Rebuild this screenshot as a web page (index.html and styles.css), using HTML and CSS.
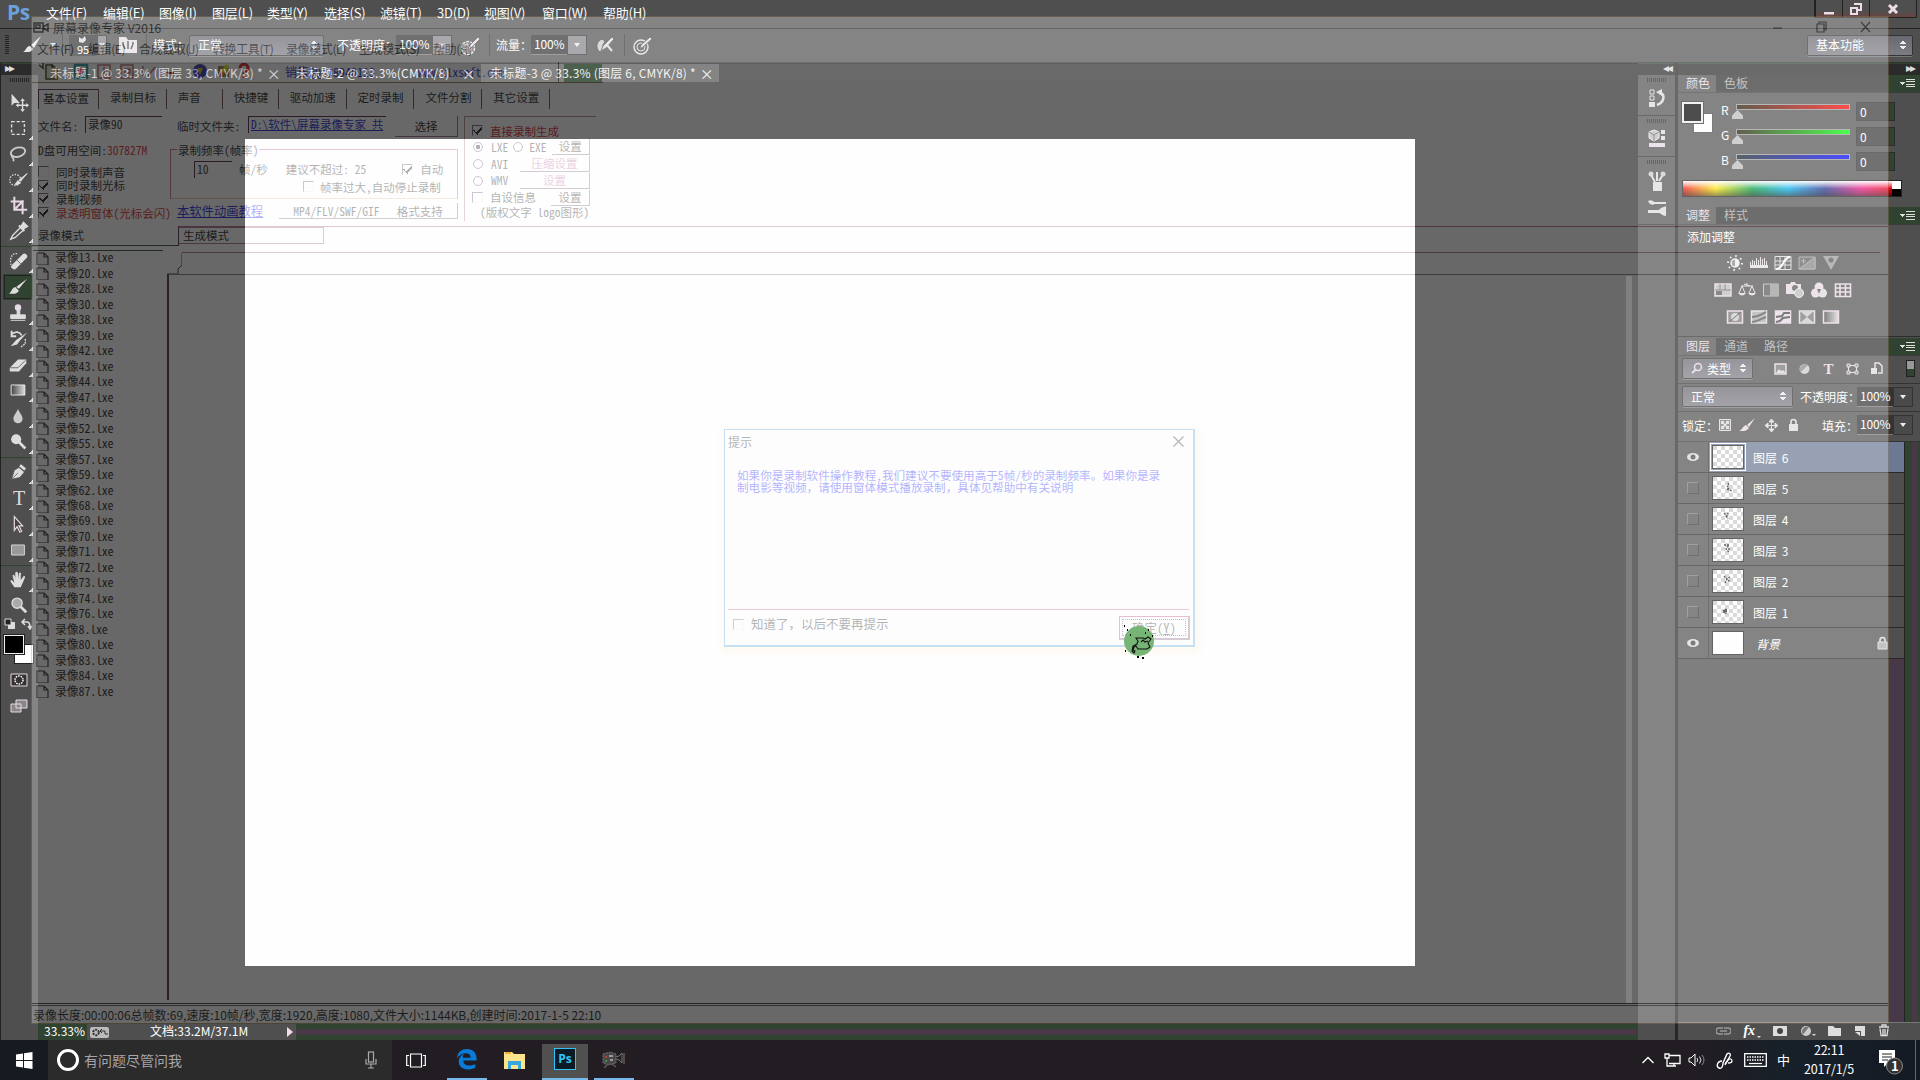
FILE: index.html
```html
<!DOCTYPE html>
<html lang="zh-CN">
  <head>
    <meta charset="UTF-8" />
    <meta name="viewport" content="width=device-width, initial-scale=1.0" />
    <title>Photoshop</title>
    <link rel="stylesheet" href="styles.css">
  </head>
  <body>
    <div class="desktop">
      <!-- Photoshop window -->
      <div class="ps">
        <header class="menubar">
          <div class="logo">Ps</div>
          <span class="m57">文件(F)</span><span class="m56">编辑(E)</span><span class="m53">图像(I)</span><span class="m55">图层(L)</span><span class="m57">类型(Y)</span><span class="m56">选择(S)</span><span class="m57">滤镜(T)</span><span class="m47">3D(D)</span><span class="m58">视图(V)</span><span class="m61">窗口(W)</span><span>帮助(H)</span>
          <div class="winButtons">
            <b class="minBtn"><svg width="12" height="12"><path d="M1 9h10v2.500H1z" fill="#f0dce8" /></svg></b>
            <b class="restoreBtn"><svg width="14" height="12"><path d="M5 1h7v6H9M2 5h6v6H2z" fill="none" stroke="#f0dce8" stroke-width="2" /></svg></b>
            <b class="closeBtn"><svg width="12" height="12"><path d="M2 2l8 8M10 2l-8 8" stroke="#f0dce8" stroke-width="3" /></svg></b>
          </div>
        </header>

        <div class="options">
          <i class="grip"></i>
          <svg class="optBrush" width="20" height="18"><path d="M19 0L9 9l3 3z" fill="#e8e8e8" /><path d="M8 10l3 3c-2 4-6 3-10 3 3-1 3-6 7-6z" fill="#e8e8e8" /></svg>
          <i class="tri"></i>
          <i class="vsep s1"></i>
          <div class="brushSize"><svg width="12" height="9"><path d="M2 2l3 2 3-3 1 4-3 3-4-1z" fill="#ddd" /></svg>95</div>
          <div class="drop narrow"><i class="tri"></i></div>
          <svg class="brushPanel" width="18" height="18"><path d="M0 1h7l2 3h9v13H0z" fill="#e6dfe4" /><path d="M4 8l2 5M9 7v6M14 8l-2 5M3 7h2M8 6h2M13 7h2" stroke="#444" stroke-width="1.500" /></svg>
          <i class="vsep s2"></i>
          <label class="modeLabel">模式：</label>
          <div class="select modeSelect">正常<i class="updown"></i></div>
          <label class="opacityLabel">不透明度：</label>
          <div class="numBox">100%</div><div class="drop"><i class="tri"></i></div>
          <svg class="optIcon" width="21" height="19"><circle cx="8" cy="12" r="6.500" fill="#666" stroke="#ddd" stroke-width="1.500" stroke-dasharray="3 1" /><path d="M4 9h8M3 13h9M7 7v10M11 8v9" stroke="#ddd" /><path d="M8 14l1-4 9-9 2 2-9 9z" fill="#e4dce2" stroke="#555" /></svg>
          <i class="vsep s3"></i>
          <label class="flowLabel">流量：</label>
          <div class="numBox">100%</div><div class="drop"><i class="tri"></i></div>
          <svg class="optIcon" width="21" height="19"><path d="M8 3C1 4 0 13 5 16c4-1 1-7 5-10z" fill="#ccc" stroke="#444" /><path d="M6 15l2-5L17 1l2 2-8 9zM13 9l5 5" fill="#e4dce2" stroke="#555" /><path d="M12 9l5 6" stroke="#ddd" stroke-width="2" /></svg>
          <i class="vsep s4"></i>
          <svg class="optIcon last" width="21" height="19"><circle cx="8" cy="11" r="7" fill="none" stroke="#ddd" stroke-width="1.500" /><circle cx="8" cy="11" r="4" fill="none" stroke="#ddd" /><path d="M7 13l1-4 9-8 2 2-9 8z" fill="#e4dce2" stroke="#555" /></svg>
          <div class="select workspace">基本功能<i class="updown"></i></div>
        </div>

        <div class="main">
          <!-- Tool palette -->
          <div class="toolbox">
            <div class="dockHead">▸▸</div>
            <i class="dots"></i>
            <div class="toolGroup">
              <div class="tool plain"><svg viewBox="0 0 24 24"><path d="M5 3v13l3-3 6 0z" fill="#ddd" /><path d="M17 10v11M11.500 15.500h11" stroke="#ddd" stroke-width="1.500" /><path d="M17 8l2.500 3h-5zM17 23l2.500-3h-5zM9.500 15.500l3-2.500v5zM24 15.500l-3-2.500v5z" fill="#ddd" /></svg></div>
              <div class="tool"><svg viewBox="0 0 24 24"><path d="M5 5h14v14H5z" fill="none" stroke="#ddd" stroke-width="1.500" stroke-dasharray="3.500 2" /></svg></div>
              <div class="tool"><svg viewBox="0 0 24 24"><ellipse cx="12" cy="10" rx="8" ry="5" transform="rotate(-15 12 10)" fill="none" stroke="#ccc" stroke-width="2" /><path d="M6 13c-3 2 3 3 1 7" fill="none" stroke="#ccc" stroke-width="2" /></svg></div>
              <div class="tool"><svg viewBox="0 0 24 24"><circle cx="9" cy="12" r="6" fill="none" stroke="#ddd" stroke-width="1.500" stroke-dasharray="1.500 1.500" /><path d="M22 5l-7 8-2-1z" fill="#ddd" stroke="#ddd" /><path d="M12 12l3 3c-3 4-7 2-7 2z" fill="#ddd" /></svg></div>
              <div class="tool"><svg viewBox="0 0 24 24"><path d="M8 2v14h14M4 7h13v14M9 15l9-9" fill="none" stroke="#e8d8e4" stroke-width="2.200" /></svg></div>
              <div class="tool"><svg viewBox="0 0 24 24"><path d="M6 17l9-9 3 3-9 8-5 2z" fill="none" stroke="#ddd" stroke-width="1.500" /><path d="M13 6l6 6M15 8l3-5 4 4-5 3z" fill="#ddd" stroke="#ddd" stroke-width="2" /></svg></div>
            </div>
            <div class="toolGroup">
              <div class="tool"><svg viewBox="0 0 24 24"><path d="M11 4c-9-1-8 12-5 16" fill="none" stroke="#ddd" stroke-width="1.500" stroke-dasharray="1.500 1.500" /><path d="M8 18L19 7" stroke="#ddd" stroke-width="6" stroke-linecap="round" /><path d="M11 11l5 5" stroke="#666" /></svg></div>
              <div class="tool active"><svg viewBox="0 0 24 24"><path d="M22 3l-9 11-3-2z" fill="#e8d8e4" /><path d="M9 12l4 4c-3 5-8 3-11 3 3-1 3-6 7-7z" fill="#ddd" /></svg></div>
              <div class="tool"><svg viewBox="0 0 24 24"><circle cx="12" cy="6" r="3.500" fill="#e8d8e4" /><path d="M11 8h3v6h6v4H4v-4h7zM4 20h16" fill="#ddd" stroke="#ddd" /></svg></div>
              <div class="tool"><svg viewBox="0 0 24 24"><path d="M5 7c4-4 9-3 11 1M5 3v6h5" fill="none" stroke="#ddd" stroke-width="2" /><path d="M22 5l-8 9-3 4-7 2 6-7z" fill="#ddd" /><path d="M20 12v5l-5 4" fill="none" stroke="#ddd" stroke-width="1.500" stroke-dasharray="2 1" /></svg></div>
              <div class="tool"><svg viewBox="0 0 24 24"><path d="M3 15L12 6h9v4l-8 9H3z" fill="#ddd" /><path d="M3 15h9l8-8" stroke="#666" fill="none" /></svg></div>
              <div class="tool"><svg viewBox="0 0 24 24"><defs><linearGradient id="grad"><stop offset="0" stop-color="#444" /><stop offset="1" stop-color="#ddd" /></linearGradient></defs><path d="M4.500 6.500h15v11h-15z" fill="url(#grad)" stroke="#eee" /></svg></div>
              <div class="tool"><svg viewBox="0 0 24 24"><path d="M12 4c1 4 5 7 5 11a5 5 0 0 1-10 0c0-4 4-7 5-11z" fill="#ccc" /></svg></div>
              <div class="tool"><svg viewBox="0 0 24 24"><circle cx="10" cy="9" r="5.500" fill="#ddd" /><path d="M13 12l7 7" stroke="#ddd" stroke-width="3" /></svg></div>
            </div>
            <div class="toolGroup g3">
              <div class="tool"><svg viewBox="0 0 24 24"><path d="M15 3l6 5-2 3-6-5zM13 7l6 5-5 6-9 2 3-10zM5 20l7-7" fill="#ddd" stroke="#555" stroke-width=".8" /></svg></div>
              <div class="tool"><span class="typeT">T</span></div>
              <div class="tool"><svg viewBox="0 0 24 24"><path d="M8 4v15l3-4 3 6 2-1-3-6h4z" fill="#444" stroke="#e8d8e4" stroke-width="1.300" /></svg></div>
              <div class="tool"><svg viewBox="0 0 24 24"><path d="M5 6.500h14v11H5z" fill="#999" stroke="#ddd" /></svg></div>
            </div>
            <div class="toolGroup g4">
              <div class="tool"><svg viewBox="0 0 24 24"><path d="M8 20c-2-4-5-6-4-8 2 0 3 2 4 3L6 7c1-2 3 0 3 4V4c1-2 3-1 3 1v6l1-6c1-2 3-1 2 1v6l3-4c2-1 2 1 1 3l-4 9z" fill="#ddd" /></svg></div>
              <div class="tool plain"><svg viewBox="0 0 24 24"><circle cx="11" cy="10" r="5.500" fill="#aaa" stroke="#ddd" stroke-width="1.500" /><path d="M15 14l6 6" stroke="#ddd" stroke-width="3" /></svg></div>
            </div>
            <div class="miniRow">
              <svg width="28" height="12"><path d="M4 4h7v7H4z" fill="#ddd" /><path d="M1 1h6v6H1z" fill="#222" stroke="#ddd" /><path d="M19 4h4q3 0 3 5M21 1l-3 3 3 3M24 8l2 3 2-3" fill="none" stroke="#ddd" stroke-width="1.500" /></svg>
            </div>
            <div class="swatches"><i class="back"></i><i class="front"></i></div>
            <svg class="bottomTool" width="18" height="14"><path d="M1 1h16v12H1z" fill="#333" stroke="#e8d8e4" /><circle cx="9" cy="7" r="4" fill="none" stroke="#fff" stroke-width="1.500" stroke-dasharray="1.500 1" /></svg>
            <svg class="bottomTool second" width="18" height="14"><path d="M1 5h10v8H1zM6 1h11v8H6z" fill="#888" stroke="#e8d8e4" /></svg>
          </div>

          <div class="work">
            <div class="docTabs">
              <div class="doc d1">未标题-1 @ 33.3% (图层 33, CMYK/8) *<b>×</b></div>
              <div class="doc d2">未标题-2 @ 33.3%(CMYK/8)<b>×</b></div>
              <div class="doc d3">未标题-3 @ 33.3% (图层 6, CMYK/8) *<b>×</b></div>
            </div>
            <div class="stage"><div class="canvas"></div><i class="scroll"></i></div>
            <footer class="status">
              <div class="zoomCell">33.33%</div>
              <svg width="19" height="11"><rect width="19" height="11" rx="2" fill="#bbb" /><circle cx="6" cy="5.500" r="2.800" fill="none" stroke="#333" stroke-width="2" stroke-dasharray="2 1" /><path d="M10 4h5v3h3M12 2l-2 2 2 2" fill="none" stroke="#333" /></svg>
              <div class="docSize">文档:33.2M/37.1M</div>
              <i class="play"></i>
            </footer>
          </div>

          <!-- Collapsed dock -->
          <div class="iconDock">
            <div class="dockHead right">◂◂</div>
            <div class="dockCell c1"><i class="dots"></i><svg width="18" height="20"><path d="M2 2h4v4H2zM2 8h4v4H2z" fill="none" stroke="#ddd" /><path d="M1 14h6v5H1z" fill="#ddd" /><path d="M9 17c8-3 8-11 3-12" fill="none" stroke="#ddd" stroke-width="2.500" /><path d="M14 1v7L8 4z" fill="#ddd" /></svg></div>
            <div class="dockCell c1"><i class="dots"></i><svg width="18" height="20"><path d="M6 1l5 2v6l-5 3-5-3V3z" fill="#bbb" stroke="#eee" /><path d="M1 3l5 3 5-3M6 6v6" stroke="#666" fill="none" /><path d="M13 1h4v4h-4zM13 7h4v4h-4zM1 14h16v4H1z" fill="#e8d8e4" /></svg></div>
            <div class="dockCell c2"><i class="dots"></i>
              <svg width="18" height="22"><path d="M5 12h9v9H5z" fill="#ddd" /><path d="M2 3l5 9M9 2v9M16 3l-5 8" stroke="#ddd" stroke-width="2" /><circle cx="3" cy="4" r="2.500" fill="#ccc" /><circle cx="15" cy="4" r="2.500" fill="#ccc" /></svg>
              <svg width="20" height="20"><path d="M1 3c4-2 5 1 7 1h11v2H8C5 8 2 6 1 3zM1 12h11c2-3 6-3 7-4v10c-4 0-5-3-7-3H1z" fill="#ddd" /></svg>
            </div>
          </div>

          <!-- Panels -->
          <aside class="panels">
            <div class="dockHead right">▸▸</div>
            <div class="tabRow"><span class="on">颜色</span><span>色板</span><i class="flyout"></i></div>
            <div class="colorBody">
              <div class="colorTop">
                <div class="swatchPair"><i class="back"></i><i class="front"></i></div>
                <div class="sliders">
                  <div class="slider"><span>R</span><div class="track red"><i></i></div><b>0</b></div>
                  <div class="slider"><span>G</span><div class="track green"><i></i></div><b>0</b></div>
                  <div class="slider"><span>B</span><div class="track blue"><i></i></div><b>0</b></div>
                </div>
              </div>
              <div class="spectrum"><i></i></div>
            </div>
            <div class="tabRow adj"><span class="on">调整</span><span>样式</span><i class="flyout"></i></div>
            <div class="adjustBody">
              <p>添加调整</p>
              <div class="iconLine first">
                <svg viewBox="0 0 18 16"><circle cx="9" cy="8" r="4" fill="#888" stroke="#eee" stroke-width="1.500" /><path d="M9 4a4 4 0 0 1 0 8z" fill="#eee" /><circle cx="9" cy="8" r="7" fill="none" stroke="#eee" stroke-width="2" stroke-dasharray="1.500 4" /></svg>
                <svg viewBox="0 0 18 16"><path d="M0 13V7h1v3h1V5h1v5h1V6h1v4h1V3h1v7h1V5h1v5h1V2h1v8h1V4h1v6h1V3h1v7h1V6h1v4h1v3z" fill="#e6dfe4" /></svg>
                <svg viewBox="0 0 18 16"><path d="M1 1.500h16v13H1zM6 2v12M11 2v12M1 6h16M1 10h16" fill="none" stroke="#ddd" /><path d="M2 14C11 13 7 4 16 2" fill="none" stroke="#fff" stroke-width="1.800" /></svg>
                <svg viewBox="0 0 18 16" class="dim"><path d="M1 2h16v12H1z" fill="#666" stroke="#ddd" /><path d="M17 2v12H1zM3 6h5M5.500 3.500v5" fill="#aaa" stroke="#ddd" /></svg>
                <svg viewBox="0 0 18 16" class="dim"><path d="M1 1h16L9 15z" fill="#ccc" /><circle cx="9" cy="5" r="2.500" fill="#555" /></svg>
              </div>
              <div class="iconLine">
                <svg viewBox="0 0 18 16"><path d="M1 2h16v12H1z" fill="#bbb" stroke="#e8d8e4" stroke-width="1.500" /><path d="M1 8h16M6 2v6M11 2v6" stroke="#666" /><path d="M2 9h6v4H2z" fill="#555" /></svg>
                <svg viewBox="0 0 18 16"><path d="M9 1v3M3 4h12M4 4l-3 7M4 4l3 7M14 4l-3 7M14 4l3 7M6 2l6 2" fill="none" stroke="#e8d8e4" /><path d="M0 11h8q-4 5-8 0zM10 11h8q-4 5-8 0z" fill="#e8d8e4" /></svg>
                <svg viewBox="0 0 18 16"><path d="M1.500 2h15v12h-15z" fill="#555" stroke="#bbb" /><path d="M8 2h9v12H8z" fill="#999" /></svg>
                <svg viewBox="0 0 18 16"><path d="M0 2h4l1-2h4l1 2h5v10H0z" fill="#e8d8e4" /><circle cx="9" cy="6" r="3" fill="#555" /><circle cx="13" cy="11" r="4.500" fill="#bbb" stroke="#eee" /></svg>
                <svg viewBox="0 0 18 16"><circle cx="9" cy="5" r="4.500" fill="#e8d8e4" /><circle cx="5.500" cy="11" r="4.500" fill="#e8d8e4" /><circle cx="12.500" cy="11" r="4.500" fill="#ddd" /><path d="M7 7h4l-2 5z" fill="#555" /></svg>
                <svg viewBox="0 0 18 16"><path d="M1.500 2h15v12.500h-15zM1 6h16M1 10h16M6 2v12M11.500 2v12" fill="none" stroke="#e8d8e4" stroke-width="1.600" /></svg>
              </div>
              <div class="iconLine">
                <svg viewBox="0 0 18 16"><path d="M1.500 2h15v12h-15z" fill="#777" stroke="#e8d8e4" stroke-width="1.500" /><circle cx="9" cy="8" r="4" fill="#ccc" /><path d="M3 13L15 3" stroke="#444" /></svg>
                <svg viewBox="0 0 18 16"><path d="M1.500 2h15v12h-15z" fill="#aaa" stroke="#ddd" stroke-width="1.500" /><path d="M2 8c6 0 8-2 14-5M2 13c6 0 8-3 14-5" stroke="#555" fill="none" stroke-width="2" /></svg>
                <svg viewBox="0 0 18 16"><path d="M1.500 2h15v12h-15z" fill="#e8d8e4" stroke="#e8d8e4" stroke-width="1.500" /><path d="M2 8l6-1 2-3h6M2 13l4-1 3-3 7-1" stroke="#444" fill="none" stroke-width="2" /></svg>
                <svg viewBox="0 0 18 16"><path d="M1.500 2h15v12h-15z" fill="#777" stroke="#e8d8e4" stroke-width="1.500" /><path d="M2 2l7 6 7-6zM2 14l7-6 7 6z" fill="#ccc" /></svg>
                <svg viewBox="0 0 18 16"><path d="M1.500 2h15v12h-15z" fill="url(#grad)" stroke="#e8d8e4" stroke-width="1.500" /></svg>
              </div>
            </div>
            <div class="tabRow lay"><span class="on">图层</span><span>通道</span><span>路径</span><i class="flyout"></i></div>
            <div class="layerRow filter">
              <div class="select kind"><svg width="12" height="12"><circle cx="7" cy="5" r="3.500" fill="none" stroke="#e8d8e4" stroke-width="1.500" /><path d="M4.500 8L1 11" stroke="#e8d8e4" stroke-width="2" /></svg>类型<i class="updown"></i></div>
              <svg class="f1" width="13" height="12"><path d="M1 1h11v10H1z" fill="#777" stroke="#e8d8e4" stroke-width="1.500" /><path d="M2 10l3-4 2 2 2-1 3 3z" fill="#ddd" /></svg>
              <svg width="13" height="12"><circle cx="6.500" cy="6" r="5" fill="#ccc" /><path d="M3 9A5 5 0 0 1 10 2z" fill="#888" /></svg>
              <span class="filterT">T</span>
              <svg width="13" height="12"><path d="M2.500 2.500h8v7h-8z" fill="none" stroke="#e8d8e4" /><path d="M1 1h3v3H1zM9 1h3v3H9zM1 8h3v3H1zM9 8h3v3H9z" fill="#777" stroke="#e8d8e4" /></svg>
              <svg width="13" height="13"><path d="M5 6V1h4l3 3v7H8" fill="none" stroke="#e8d8e4" stroke-width="1.500" /><path d="M1 6h6v6H1z" fill="#ddd" /></svg>
              <i class="toggle"></i>
            </div>
            <div class="layerRow blend">
              <div class="select blendSelect">正常<i class="updown"></i></div>
              <label>不透明度：</label><div class="numBox">100%</div><div class="drop flat"><i class="tri"></i></div>
            </div>
            <div class="layerRow lock">
              <label class="lockLabel">锁定：</label>
              <svg width="12" height="12"><path d="M.5.500h11v11H.5z" fill="#777" stroke="#e8d8e4" /><path d="M2 2h3v3H2zM7 2h3v3H7zM4.500 4.500h3v3h-3zM2 7h3v3H2zM7 7h3v3H7z" fill="#ddd" /></svg>
              <svg width="16" height="14"><path d="M16 0L8 7l2 2zM7 7l3 3c-3 4-6 3-10 3 3-1 4-5 7-6z" fill="#e8d8e4" /></svg>
              <svg width="13" height="13"><path d="M6.500 0l2.500 3H4zM6.500 13L9 10H4zM0 6.500L3 4v5zM13 6.500L10 4v5zM6.500 2v9M2 6.500h9" fill="#ddd" stroke="#ddd" /></svg>
              <svg width="11" height="14"><path d="M1 6h9v7H1z" fill="#ddd" /><path d="M3 6V4a2.500 2.500 0 0 1 5 0v2" fill="none" stroke="#ddd" stroke-width="1.600" /></svg>
              <label class="fillLabel">填充：</label><div class="numBox">100%</div><div class="drop flat"><i class="tri"></i></div>
            </div>
            <div class="layersWrap">
              <div class="layers">
                <div class="layer selected"><div class="vis"><svg width="14" height="10"><ellipse cx="7" cy="5" rx="6" ry="4" fill="#ddd" /><circle cx="7" cy="5" r="2.500" fill="#444" /></svg></div><div class="thumb sel"></div><span>图层 6</span></div>
                <div class="layer"><div class="vis"><i></i></div><div class="thumb"><svg width="30" height="22"><path d="M15 6l1 2-2 2 3 3 2 1M14 12l2 1" fill="none" stroke="#222" stroke-width="1.400" stroke-dasharray="2 1" /></svg></div><span>图层 5</span></div>
                <div class="layer"><div class="vis"><i></i></div><div class="thumb"><svg width="30" height="22"><path d="M11 5l3 3 1-3M13 8l2 3" fill="none" stroke="#222" stroke-width="1.400" stroke-dasharray="2 1" /></svg></div><span>图层 4</span></div>
                <div class="layer"><div class="vis"><i></i></div><div class="thumb"><svg width="30" height="22"><path d="M11 6h5l-3 4 3 3M16 9v3" fill="none" stroke="#222" stroke-width="1.400" stroke-dasharray="2 1" /></svg></div><span>图层 3</span></div>
                <div class="layer"><div class="vis"><i></i></div><div class="thumb"><svg width="30" height="22"><path d="M11 6l3 3 3-2M12 13l2-4 3 3" fill="none" stroke="#222" stroke-width="1.400" stroke-dasharray="2 1" /></svg></div><span>图层 2</span></div>
                <div class="layer"><div class="vis"><i></i></div><div class="thumb"><svg width="30" height="22"><path d="M10 10h4M11 12l2-4v5" fill="none" stroke="#222" stroke-width="2" stroke-dasharray="2 1" /></svg></div><span>图层 1</span></div>
                <div class="layer"><div class="vis"><svg width="14" height="10"><ellipse cx="7" cy="5" rx="6" ry="4" fill="#ddd" /><circle cx="7" cy="5" r="2.500" fill="#444" /></svg></div><div class="thumb solid"></div><span class="bgName">背景</span><svg class="bgLock" width="11" height="14"><path d="M1 6h9v7H1z" fill="#aaa" stroke="#ddd" /><path d="M3 6V4a2.500 2.500 0 0 1 5 0v2" fill="none" stroke="#e8d8e4" stroke-width="1.600" /></svg></div>
              </div>
              <i class="layerScroll"></i>
            </div>
            <footer class="layerTools">
              <svg width="15" height="10"><path d="M7 2H3a3 3 0 0 0 0 6h4M8 2h4a3 3 0 0 1 0 6H8M4 5h7" fill="none" stroke="#999" stroke-width="1.500" /></svg>
              <em>fx<i class="corner"></i></em>
              <svg width="14" height="12"><path d="M0 1h14v10H0z" fill="#ddd" /><circle cx="7" cy="6" r="3" fill="#444" /></svg>
              <svg width="16" height="12"><circle cx="6" cy="6" r="5" fill="#ccc" /><path d="M3 9.500A5 5 0 0 1 9 2z" fill="#777" /><path d="M12 9h4l-2 2z" fill="#ddd" /></svg>
              <svg width="13" height="12"><path d="M0 1h5l2 2h6v8H0z" fill="#ddd" /></svg>
              <svg width="12" height="12"><path d="M1 1h10v10H7V6H1z" fill="#ddd" /><path d="M1 7l5 4V7z" fill="#ddd" /></svg>
              <svg width="12" height="13"><path d="M1 3h10M4 3V1h4v2M2 4.500l1 7h6l1-7M5 5v6M7 5v6" fill="none" stroke="#ddd" stroke-width="1.300" /></svg>
            </footer>
          </aside>
        </div>
      </div>

      <!-- Screen recorder window, fading out over Photoshop -->
      <div class="recorder">
        <div class="recTitle">
          <svg width="17" height="13"><path d="M1 2h9v9H1zM10 6l5-3v7l-5-3M3 4h4v3H3z" fill="none" stroke="#000" stroke-width="1.500" /></svg>
          <span>屏幕录像专家 V2016</span>
          <svg class="recButtons" width="100" height="14"><path d="M1 8h9M45 4h7v8h-7zM47 4V2h7v8h-2M89 2l9 10M98 2l-9 10" fill="none" stroke="#222" stroke-width="1.200" /></svg>
        </div>
        <div class="recMenu"><span>文件(F)</span><span>编辑(E)</span><span class="w74">合成截取(J)</span><span class="w73">转换工具(T)</span><span class="w73">录像模式(L)</span><span class="w74">生成模式(S)</span><span>帮助(H)</span></div>
        <div class="recTools">
          <svg width="220" height="18"><path d="M8 2h6l5 4v10H8zM1 2l5 4M5 0v5M14 1v4" fill="#ddb" stroke="#220" stroke-width="1.500" /><path d="M37 2h12v13H37z" fill="none" stroke="#088" stroke-width="2.500" /><circle cx="43" cy="8" r="3" fill="#c00" /><path d="M60 2h12v13H60zM66 4v7M83 2h12v13H83zM87 6h5v4h-5zM105 3v12M110 13l7-9" fill="none" stroke="#a55" stroke-width="1.500" /><path d="M128 10h8" stroke="#800" stroke-width="2" /><circle cx="162" cy="8" r="7" fill="#119" /><path d="M159 5h6l-3 7z" fill="#aa0" /><path d="M180 3h11v11h-11z" fill="#863" /><path d="M185 9l5-7" stroke="#dd0" stroke-width="4" /><path d="M202 5c0-5 8-5 8 0 0 3-4 3-4 6M206 13v2" fill="none" stroke="#c00" stroke-width="3" /></svg>
          <span class="contact">销售QQ:78940113</span><span class="site">www.tlxsoft.com</span><i class="rebar"></i>
        </div>
        <div class="recTabs"><span class="on">基本设置</span><span>录制目标</span><span class="t56">声音</span><span class="t56">快捷键</span><span>驱动加速</span><span>定时录制</span><span>文件分割</span><span>其它设置</span></div>

        <div class="settings">
          <div class="colA">
            <div class="fileRow"><label>文件名:</label><div class="field">录像90</div></div>
            <div class="space">D盘可用空间:<b>307827M</b></div>
            <div class="check"><i></i>同时录制声音</div>
            <div class="check"><i class="ok"></i>同时录制光标</div>
            <div class="check"><i class="ok"></i>录制视频</div>
            <div class="check warn"><i class="ok"></i>录透明窗体(光标会闪)</div>
          </div>
          <div class="colB">
            <div class="tempRow"><label>临时文件夹:</label><div class="field link">D:\软件\屏幕录像专家 共</div><div class="btn pick">选择</div></div>
            <div class="rate">
              <div class="rateLegend">录制频率(帧率)</div>
              <div class="rateRow"><div class="field">10</div><span>帧/秒</span><span class="advice">建议不超过: 25</span><div class="check auto"><i class="ok"></i>自动</div></div>
              <div class="check stop"><i></i>帧率过大,自动停止录制</div>
            </div>
            <div class="linkRow"><u>本软件动画教程</u><div class="btn formats">MP4/FLV/SWF/GIF&nbsp;&nbsp; 格式支持</div></div>
          </div>
          <div class="colC">
            <div class="check direct"><i class="ok"></i>直接录制生成</div>
            <div class="fmt"><i class="radio dot"></i><span class="lxe">LXE</span><i class="radio"></i><span>EXE</span><div class="btn small">设置</div></div>
            <div class="fmt"><i class="radio"></i><span>AVI</span><div class="btn wide">压缩设置</div></div>
            <div class="fmt"><i class="radio"></i><span>WMV</span><div class="btn wide">设置</div></div>
            <div class="fmt"><i class="box"></i><span>自设信息</span><div class="btn small">设置</div></div>
            <p>(版权文字 logo图形)</p>
          </div>
        </div>

        <div class="modes"><div class="modeA">录像模式</div><div class="modeB"><span>生成模式</span></div></div>
        <div class="files">
          <ul id="fileList"></ul>
          <div class="preview">
            <svg width="15" height="25"><path d="M0 24h11v-5l4-4V3" fill="none" stroke="#222" stroke-width="1" /></svg>
            <div class="previewTop"></div>
            <div class="previewBody"></div>
          </div>
        </div>
        <div class="recStatus"><span>录像长度:00:00:06总帧数:69,速度:10帧/秒,宽度:1920,高度:1080,文件大小:1144KB,创建时间:2017-1-5 22:10</span></div>
      </div>

      <!-- Hint dialog -->
      <div class="dialog">
        <div class="dialogTitle"><span>提示</span><svg width="11" height="11"><path d="M.5.500l10 10M10.500.500l-10 10" stroke="#222" stroke-width="1.200" /></svg></div>
        <div class="dialogText">如果你是录制软件操作教程,我们建议不要使用高于5帧/秒的录制频率<span class="full">。</span>如果你是录<br><span class="full">制电影等视频，请使用窗体模式播放录制，具体见帮助中有关说明</span></div>
        <div class="dialogFoot"><i></i><span class="full">知道了，以后不要再提示</span><div class="okBtn"><span>确定(<u>Y</u>)</span></div></div>
      </div>
      <svg class="pointer" width="36" height="38"><circle cx="18" cy="19" r="15" fill="#76b576" /><path d="M15 16h7l2 1 3-2 3 2-3 4 2 4-3 2h-9l-2-3-2 1-1 3 2 1-1 2-2-2 1-5 4-2 1-3zM20 20l2-2 2 2 3-1" fill="none" stroke="#111" stroke-width="1.100" /><path d="M3 4h1M6 8h1M9 13h1M27 8h1M31 14h1M4 29h1M16 35h2M21 36h2M24 11h1" stroke="#000" stroke-width="2" /></svg>

      <!-- Taskbar -->
      <div class="taskbar">
        <div class="start"><svg width="17" height="17"><path d="M0 2.500L7 1.500V8H0zM8 1.300L16.500 0v8H8zM0 9h7v6.500l-7-1zM8 9h8.500v8L8 15.700z" fill="#fff" /></svg></div>
        <div class="search"><i class="cortana"></i><span>有问题尽管问我</span><svg width="12" height="18"><rect x="3.500" y="1" width="5" height="10" fill="none" stroke="#aaa" stroke-width="1.200" /><path d="M1 8v5h10V8M6 13v4M3 17h6" fill="none" stroke="#aaa" stroke-width="1.200" /></svg></div>
        <div class="task view"><svg width="20" height="15"><path d="M4.500 1h11v13h-11zM3 2.500H.7v10H3M17 2.500h2.300v10H17" fill="none" stroke="#fff" stroke-width="1.200" /></svg></div>
        <div class="task edge run"><svg width="22" height="22" viewBox="0 0 24 24"><path d="M1 11C2 4 6 1 12 1c7 0 11 5 10.500 12.500H8c0 6 8 7 13 4v4c-8 4-18 2-18-7 0-4 3-7 6-8-1 1-1.500 2-1.500 4H16c0-7-10-6-15 .5z" fill="#0a7ad8" /></svg></div>
        <div class="task folder"><svg width="22" height="19"><path d="M0 1h8l2 2h11v15H0z" fill="#fce48c" /><path d="M1 1h6v2H1z" fill="#f0b030" /><path d="M4 10h13v8h-3v-4H7v4H4z" fill="#38a8dc" /></svg></div>
        <div class="task psTask run"><div class="psIcon">Ps</div></div>
        <div class="task cam run"><svg width="24" height="18"><path d="M1 4l7-2 6 2v9l-8 2-5-2z" fill="#4a4748" stroke="#777072" stroke-dasharray="2 1" /><path d="M14 7l3-1 3-3v10l-3-3-3-1" fill="#222" stroke="#777" /><path d="M22 3v11M5 15l-3 3M10 14l4 3" stroke="#655" stroke-width="1.500" /><path d="M3 6h2v2H3z" fill="#a43" /><path d="M3 10h2v2H3z" fill="#394" /><path d="M7 5h4v2H7zM8 9h3v2H8z" fill="#999" /></svg></div>
        <div class="tray">
          <svg class="tr1" width="12" height="8"><path d="M.5 7L6 1.500 11.500 7" fill="none" stroke="#fff" stroke-width="1.400" /></svg>
          <svg class="tr2" width="17" height="14"><path d="M5 2.500h11v8H5M1 1h4v4H1zM3 5v8h9M10 10.500V13" fill="none" stroke="#fff" stroke-width="1.300" /></svg>
          <svg class="tr3" width="17" height="14"><path d="M1 5h2l4-4v12L3 9H1z" fill="none" stroke="#fff" /><path d="M9 5q1.500 2 0 4M11.500 3.500q3 3.500 0 7" fill="none" stroke="#ddd" /><path d="M14 2q4 5 0 10" fill="none" stroke="#888" /></svg>
          <svg class="tr4" width="17" height="17"><path d="M6 9C1 9 0 15 3 16s4-2 4-5L11 2c2-2 4 0 3 2L9 13" fill="none" stroke="#fff" stroke-width="1.400" /><path d="M9 12l3-4c2-2 4-1 4 1s-2 2-4 2" fill="none" stroke="#fff" stroke-width="1.300" /></svg>
          <svg class="tr5" width="23" height="14"><path d="M.7.700h21.600v12.600H.7z" fill="none" stroke="#fff" stroke-width="1.300" /><path d="M3 4h17M3 7h17" stroke="#fff" stroke-width="1.500" stroke-dasharray="1.500 1" /><path d="M5 10.500h13" stroke="#fff" stroke-width="1.200" /></svg>
          <span class="ime">中</span>
          <div class="clock">22:11<br>2017/1/5</div>
          <svg class="note" width="24" height="25"><path d="M0 0h16v13h-7l-4 4v-4H0z" fill="#fff" /><path d="M3 4h10M3 7h10M3 10h6" stroke="#222" /><circle cx="15.500" cy="16" r="8" fill="#333" stroke="#888" /><text x="12" y="21" fill="#fff" font-size="13" font-weight="bold">1</text></svg>
          <i class="peek"></i>
        </div>
      </div>
    </div>

    <script>
      const names = ["13", "20", "28", "30", "38", "39", "42", "43", "44", "47", "49", "52", "55", "57", "59", "62", "68", "69", "70", "71", "72", "73", "74", "76", "8", "80", "83", "84", "87"];
      const fileList = document.getElementById("fileList");

      names.forEach((name) => {
        const item = document.createElement("li");
        item.innerHTML = `<svg width="13" height="13"><path d="M1 1h7l4 4v8H1zM8 1v4h4" fill="none" stroke="#201020" stroke-width="1.200"/></svg>录像${name}.lxe`;
        fileList.appendChild(item);
      });
    </script>
  </body>
</html>
```
FILE: styles.css
```css
* {
  margin: 0;
  padding: 0;
  box-sizing: border-box;
}

body {
  width: 1920px;
  height: 1080px;
  overflow: hidden;
  background: #282828;
  color: #fff;
  font-family: "Noto Sans CJK SC", sans-serif;
  font-size: 12px;
  white-space: nowrap;
}

i,
em {
  font-style: normal;
}

i {
  display: block;
  flex: none;
}

svg {
  display: block;
  flex: none;
}

.desktop {
  position: relative;
  width: 1920px;
  height: 1080px;
}

/* Photoshop frame */
.ps {
  height: 1040px;
  background: #4f4f4f;
  display: flex;
  flex-direction: column;
}

.menubar {
  height: 28px;
  display: flex;
  align-items: flex-start;
  font-size: 13px;
  line-height: 26px;
}

.menubar span {
  letter-spacing: -0.2px;
}

.logo {
  width: 46px;
  padding-left: 7px;
  color: #6ca0dc;
  font: bold 21px/24px "Open Sans", sans-serif;
  letter-spacing: -0.5px;
}

.m47 { width: 47px; }
.m53 { width: 53px; }
.m55 { width: 55px; }
.m56 { width: 56px; }
.m57 { width: 57px; }
.m58 { width: 58px; }
.m61 { width: 61px; }

.winButtons {
  display: flex;
  margin-left: auto;
  margin-right: 3px;
  height: 18px;
  border: 1px solid #222;
  border-top: 0;
}

.winButtons b {
  display: flex;
  align-items: center;
  justify-content: center;
  background: linear-gradient(#4f4f4f 65%, #6a4440);
  border-left: 1px solid #222;
  width: 27px;
}

.winButtons .closeBtn {
  width: 47px;
}

.options {
  height: 35px;
  border-top: 1px solid #222;
  border-bottom: 1px solid #333;
  padding-bottom: 1px;
  display: flex;
  align-items: center;
  font-size: 12px;
}

.options label {
  padding-bottom: 1px;
}

.grip {
  width: 4px;
  height: 20px;
  margin-left: 5px;
  background: repeating-linear-gradient(#222 0 1px, #4f4f4f 1px 2px);
}

.optBrush { margin-left: 13px; }
.optBrush + .tri { margin-left: 8px; }

.tri {
  border: 3px solid transparent;
  border-top: 4px solid #eee;
  border-bottom: 0;
}

.vsep {
  width: 1px;
  height: 22px;
  background: #333;
}

.s1 { margin: 0 6px 0 6px; }
.s2 { margin: 0 6px 0 9px; }
.s3 { margin: 0 6px 0 8px; }
.s4 { margin: 0 8px 0 8px; }

.brushSize {
  width: 28px;
  height: 21px;
  background: #353535;
  display: flex;
  flex-direction: column;
  align-items: center;
  line-height: 11px;
  font-size: 11px;
}

.drop {
  width: 20px;
  height: 20px;
  background: #84848a;
  border: 1px solid #333;
  display: flex;
  align-items: center;
  justify-content: center;
}

.drop.narrow { width: 10px; }
.drop.flat { background: #4a4a4a; }
.brushPanel { margin-left: 12px; }
.modeLabel { width: 36px; overflow: hidden; }

.select {
  height: 21px;
  background: linear-gradient(#686870, #7c7c84);
  border: 1px solid #333;
  border-radius: 2px;
  line-height: 17px;
  padding: 0 6px 1px 8px;
  display: flex;
  align-items: center;
  box-shadow: 0 1px 0 #777;
}

.modeSelect { width: 135px; }

.updown {
  margin-left: auto;
  width: 6px;
  height: 10px;
  background:
    conic-gradient(from 143deg at 50% 0, #eee 0 74deg, transparent 0) 0 0 / 6px 4px no-repeat,
    conic-gradient(from -37deg at 50% 100%, #eee 0 74deg, transparent 0) 0 6px / 6px 4px no-repeat;
}

.opacityLabel { width: 59px; margin-left: 13px; }

.numBox {
  width: 36px;
  height: 20px;
  background: #333;
  border-bottom: 1px solid #777;
  line-height: 18px;
  padding-left: 3px;
  overflow: hidden;
  letter-spacing: -0.2px;
}

.optIcon { margin-left: 8px; }
.optIcon.last { margin-left: 0; }
.flowLabel { width: 35px; overflow: hidden; }

.workspace {
  width: 106px;
  margin-left: auto;
  margin-right: 7px;
}

.main {
  flex: 1;
  min-height: 0;
  display: flex;
  background: #282828;
}

/* Tool palette */
.toolbox {
  width: 38px;
  background: #4f4f4f;
  border-left: 1px solid #222;
}

.dockHead {
  height: 12px;
  background: #2a2a2a;
  border-top: 1px solid #304330;
  color: #ddd;
  font: 12px/9px "DejaVu Sans", sans-serif;
  padding-left: 4px;
  letter-spacing: -2px;
}

.dockHead.right {
  text-align: right;
  padding-right: 6px;
}

.dots {
  width: 20px;
  height: 4px;
  margin: 3px auto 0 9px;
  background: repeating-linear-gradient(90deg, #262626 0 1px, #4f4f4f 1px 2px);
}

.toolGroup {
  margin-top: 7px;
}

.toolGroup + .toolGroup {
  margin-top: 1.7px;
  padding-top: 1px;
  border-top: 1px solid #304330;
}

.toolGroup.g3,
.toolGroup.g4 {
  margin-top: 2px;
}

.tool {
  height: 25.9px;
  width: 32px;
  padding: 2px 0 0 6px;
  background: linear-gradient(135deg, transparent 50%, #ddd 50%) 28px 21px / 4px 4px no-repeat;
}

.tool.plain { background: none; }

.tool svg {
  width: 22px;
  height: 22px;
}

.tool.active {
  margin-left: 2px;
  width: 30px;
  padding-left: 4px;
  background: #304330;
  outline: 1px solid #222;
  outline-offset: -2px;
}

.g4 .tool { height: 25.2px; }

.typeT {
  display: block;
  text-align: center;
  width: 24px;
  color: #ddd;
  font: 20px/22px "Liberation Serif", serif;
}

.miniRow {
  height: 15px;
  padding: 1px 0 0 3px;
}

.swatches {
  display: grid;
  width: 30px;
  height: 29px;
  margin: 3px 0 0 3px;
  grid-template: 9px 10px 10px / 10px 10px 10px;
}

.swatches .back {
  grid-area: 2 / 2 / 4 / 4;
  background: #fff;
  border: 1px solid #222;
}

.swatches .front {
  grid-area: 1 / 1 / 3 / 3;
  background: #000;
  border: 1px solid #eee;
  outline: 1px solid #222;
}

.bottomTool { margin: 9px 0 0 9px; }
.bottomTool.second { margin-top: 12px; }

/* Document area */
.work {
  width: 1600px;
  display: flex;
  flex-direction: column;
}

.docTabs {
  height: 19px;
  display: flex;
  background: #292929;
  border-top: 1px solid #1c1c1c;
  font-size: 12px;
  line-height: 18px;
  letter-spacing: 0.22px;
  color: #c4c0c4;
}

.doc {
  display: flex;
  justify-content: space-between;
  height: 18px;
}

.doc b {
  font-weight: normal;
  font-size: 14px;
}

.d1 { width: 243px; padding-left: 12px; }
.d2 { width: 186px; margin-left: 9px; padding-left: 6px; }

.d3 {
  width: 238px;
  margin-left: 5px;
  padding: 0 5px 0 9px;
  background: linear-gradient(90deg, #4f4f4f 83px, #001c00 83px 121px, #4f4f4f 121px);
}

.d2,
.d3 {
  color: #eee;
}

.stage {
  flex: 1;
  display: flex;
  justify-content: space-between;
  padding-left: 207px;
  padding-top: 57px;
}

.canvas {
  width: 1170px;
  height: 827px;
  background: #fff;
}

.scroll {
  width: 6px;
  height: 727px;
  margin: 137px 6px 0 0;
  background: #4a4a4a;
}

.status {
  height: 16px;
  display: flex;
  align-items: center;
  line-height: 13px;
  background: linear-gradient(#304330 5px, #483848 5px 11px, #304330 11px);
}

.zoomCell {
  width: 52px;
  height: 16px;
  padding-left: 6px;
  background: #304330;
}

.status svg {
  background: #4f4f4f;
  box-shadow: 0 0 0 3px #4f4f4f;
}

.docSize {
  width: 177px;
  height: 16px;
  padding-left: 41px;
  background: #4f4f4f;
}

.play {
  width: 10px;
  height: 16px;
  background: #4f4f4f;
}

.play::before {
  content: "";
  display: block;
  width: 0;
  margin: 3px 0 0 1px;
  border: 5px solid transparent;
  border-left: 6px solid #f0dce8;
  border-right: 0;
}

/* Collapsed dock */
.iconDock {
  width: 37px;
  background: #4f4f4f;
}

.iconDock .dockHead {
  padding-right: 4px;
}

.dockCell {
  height: 41px;
  border-bottom: 1px solid #2a2a2a;
  display: flex;
  flex-direction: column;
  align-items: center;
  gap: 6px;
}

.dockCell.c2 {
  height: 68px;
  gap: 6px;
}

/* Panels */
.panels {
  width: 242px;
  margin-left: 3px;
  background: #4f4f4f;
  display: flex;
  flex-direction: column;
}

.tabRow {
  height: 18px;
  display: flex;
  background: linear-gradient(90deg, #2e2e2e 210px, #304330 210px);
  border-bottom: 1px solid #3a3a3a;
  color: #aaa;
  line-height: 15px;
}

.tabRow span {
  width: 40px;
  padding-left: 8px;
}

.tabRow .on {
  width: 38px;
  background: #4f4f4f;
  color: #e4dce4;
}

.tabRow.adj { margin-top: 3px; }
.tabRow.lay { margin-top: 1px; }

.flyout {
  margin: 4px 5px 0 auto;
  width: 15px;
  height: 9px;
  background:
    conic-gradient(from 141deg at 50% 0, transparent 0, transparent 0) 0 0 / 0 0 no-repeat,
    conic-gradient(from -40deg at 50% 100%, #ddd 0 80deg, transparent 0) 0 3px / 5px 3px no-repeat,
    repeating-linear-gradient(#ddd 0 1px, transparent 1px 2.500px) 6px 0 / 9px 9px no-repeat;
}

.colorBody {
  height: 111px;
  padding: 7px 0 0 4px;
}

.colorTop {
  display: flex;
}

.swatchPair {
  display: grid;
  width: 31px;
  height: 31px;
  margin-top: 2px;
  grid-template: 11px 10px 10px / 11px 10px 10px;
}

.swatchPair .back {
  grid-area: 2 / 2 / 4 / 4;
  background: #fff;
  border: 1px solid #444;
}

.swatchPair .front {
  grid-area: 1 / 1 / 3 / 3;
  background: #000;
  border: 2px solid #eee;
  outline: 1px solid #333;
}

.sliders {
  padding-left: 8px;
}

.slider {
  height: 25px;
  display: flex;
  align-items: flex-start;
}

.slider span {
  width: 15px;
  line-height: 20px;
}

.track {
  width: 114px;
  height: 6px;
  margin-top: 4px;
  border: 1px solid #999;
}

.track i {
  width: 11px;
  height: 9px;
  margin: 5px 0 0 -5px;
  background: #bbb;
  clip-path: polygon(50% 0, 100% 60%, 100% 100%, 0 100%, 0 60%);
}

.red { background: linear-gradient(90deg, #201800, #ff0000); }
.green { background: linear-gradient(90deg, #201800, #00ff00); }
.blue { background: linear-gradient(90deg, #102028, #0000ff); }

.slider b {
  width: 39px;
  height: 19px;
  margin: 2px 0 0 6px;
  padding-left: 3px;
  background: linear-gradient(90deg, #353535 33px, #304330 33px);
  border: 1px solid #2c2c2c;
  line-height: 17px;
  font-weight: normal;
}

.spectrum {
  width: 220px;
  height: 17px;
  margin-top: 5px;
  border: 1px solid #222;
  background:
    linear-gradient(#fff, transparent 50%, rgba(0, 0, 0, 0.55)),
    linear-gradient(90deg, #f01010, #ffe800 15%, #009c40 32%, #00b0f0 48%, #203090 65%, #f01080 82%, #e80010 96%);
}

.spectrum i {
  width: 9px;
  height: 15px;
  margin-left: auto;
  background: linear-gradient(#fff 50%, #000 50%);
}

.adjustBody {
  height: 112px;
  border-bottom: 1px solid #2c2c2c;
}

.adjustBody p {
  padding: 3px 0 0 9px;
  line-height: 18px;
}

.iconLine {
  height: 27px;
  display: flex;
  justify-content: center;
  align-items: center;
  gap: 6px;
  padding-right: 32px;
}

.iconLine.first { margin-top: 3px; }

.iconLine svg {
  width: 18px;
  height: 16px;
}

.dim { opacity: 0.6; }

.layerRow {
  height: 28px;
  border-bottom: 1px solid #333;
  display: flex;
  align-items: center;
  padding: 0 0 2px 4px;
}

.kind {
  width: 71px;
  gap: 4px;
}

.filter { gap: 11px; }
.filter .kind { margin-right: 10px; }

.filterT {
  width: 13px;
  text-align: center;
  color: #e8d8e4;
  font: bold 15px/14px "Liberation Serif", serif;
}

.toggle {
  width: 9px;
  height: 17px;
  margin-left: 12px;
  border: 1px solid #222;
  background: linear-gradient(#999 8px, #304330 8px);
}

.blendSelect { width: 111px; margin-right: 7px; }
.blend label { width: 57px; }
.lock { height: 30px; padding-bottom: 3px; }
.lockLabel { width: 37px; }
.lock svg { margin-right: 8px; }
.lock svg + svg { margin-right: 10px; }
.fillLabel { width: 35px; margin-left: 13px; overflow: hidden; }

.layersWrap {
  flex: 1;
  display: flex;
  background: #494949;
}

.layers {
  width: 226px;
  background: linear-gradient(90deg, #494949 211px, #483848 211px);
}

.layer {
  height: 31px;
  display: flex;
  align-items: center;
  background: #4f4f4f;
  border-bottom: 1px solid #282828;
}

.layer.selected {
  background: linear-gradient(90deg, #4f4f4f 31px, #6c7894 31px);
}

.vis {
  width: 31px;
  height: 30px;
  border-right: 1px solid #333;
  display: flex;
  align-items: center;
  justify-content: center;
}

.vis i {
  width: 12px;
  height: 12px;
  border: 1px solid #777;
  border-right-color: #333;
  border-bottom-color: #333;
}

.thumb {
  width: 32px;
  height: 24px;
  margin-left: 3px;
  border: 1px solid #222;
  background: repeating-conic-gradient(#fff 0 25%, #ccc 0 50%) 0 0 / 8px 8px;
}

.thumb.sel {
  outline: 2px solid transparent;
  box-shadow: 0 0 0 1px #6c7894, 0 0 0 2px #fff;
}

.thumb.solid { background: #fff; }
.layer span { margin-left: 9px; word-spacing: 2px; }
.layer .bgName { margin-left: 12px; font-style: italic; }
.bgLock { margin-left: 97px; }

.layerScroll {
  width: 16px;
  background: linear-gradient(90deg, #304330 7px, #483848 7px 13px, #304330 13px);
  border-left: 1px solid #222;
}

.layerTools {
  height: 18px;
  border-top: 1px solid #777;
  display: flex;
  align-items: center;
  justify-content: space-between;
  padding: 0 30px 2px 38px;
}

.layerTools em {
  display: flex;
  align-items: flex-end;
  gap: 2px;
  font: italic bold 14px/14px "Liberation Serif", serif;
}

.corner {
  border: 2px solid transparent;
  border-top-color: #ddd;
  border-bottom: 0;
}

/* Screen recorder */
.recorder {
  position: absolute;
  left: 31px;
  top: 16px;
  width: 1858px;
  height: 1008px;
  background: #fdfdfd;
  border: 1px solid #a08850;
  color: #000;
  opacity: 0.3;
  font-size: 11.5px;
  font-feature-settings: "hwid";
  display: flex;
  flex-direction: column;
}

.recTitle {
  height: 20px;
  display: flex;
  align-items: center;
  padding-left: 1px;
  font-size: 12px;
  font-feature-settings: normal;
}

.recTitle span { margin-left: 3px; }

.recButtons {
  margin-left: auto;
  margin-right: 16px;
}

.recMenu {
  height: 25px;
  display: flex;
  padding-left: 5px;
  line-height: 23px;
  font-size: 12px;
  letter-spacing: -0.4px;
  font-feature-settings: normal;
}

.recMenu span { width: 51px; }
.recMenu .w73 { width: 73px; }
.recMenu .w74 { width: 74px; }

.recTools {
  height: 21px;
  width: 571px;
  border-bottom: 1px solid #864;
  display: flex;
  align-items: center;
  padding: 0 0 1px 6px;
  margin-bottom: 6px;
}

.contact,
.site {
  color: #0000b0;
}

.contact { margin-left: 27px; width: 133px; font-size: 12px; }
.site { font-size: 11.5px; width: 140px; }

.rebar {
  width: 1px;
  height: 20px;
  background: #333;
}

.recTabs {
  height: 20px;
  display: flex;
  padding-left: 6px;
  line-height: 16px;
}

.recTabs span {
  width: 67.8px;
  padding-left: 11px;
  border-right: 1px solid #532;
}

.recTabs .on {
  width: 61px;
  padding-left: 4px;
  border-left: 1px solid #313;
  border-top: 1px solid #313;
}

.recTabs .t56 { width: 56px; }

.settings {
  height: 117px;
  display: flex;
  padding: 7px 0 0 6px;
}

.field {
  height: 17px;
  border-left: 1px solid #302;
  border-top: 1px solid #302;
  padding-left: 2px;
  line-height: 15px;
}

.btn {
  border-right: 1px solid #757;
  border-bottom: 1px solid #757;
  text-align: center;
}

.check {
  display: flex;
  align-items: center;
  height: 13.6px;
}

.check i,
.box {
  width: 11px;
  height: 11px;
  margin-right: 7px;
  border: 1px solid #646;
  border-right-color: #eee;
  border-bottom-color: #eee;
}

.check .ok {
  background:
    linear-gradient(45deg, transparent 45%, #000 45% 60%, transparent 60%) 0 4px / 5px 5px no-repeat,
    linear-gradient(135deg, transparent 42%, #000 42% 60%, transparent 60%) 3px 1px / 7px 7px no-repeat;
}

.colA { width: 132px; }
.colB { width: 294px; }
.fileRow { display: flex; line-height: 20px; }
.fileRow label { width: 47px; }
.fileRow .field { width: 77px; }

.space {
  margin: 6px 0 6px;
  line-height: 17px;
}

.space b {
  color: #c00;
  font-weight: normal;
}

.warn { color: #c00; }

.tempRow {
  display: flex;
  padding-left: 7px;
  line-height: 20px;
}

.tempRow label { width: 71px; }

.field.link {
  width: 138px;
  color: #0000c8;
  text-decoration: underline;
}

.pick {
  width: 63px;
  height: 21px;
  margin-left: 9px;
}

.rate {
  width: 288px;
  height: 50px;
  margin-top: 12px;
  border: 1px solid #a58;
  border-bottom-color: #db9;
}

.rateLegend {
  width: 82px;
  margin: -10px 0 0 6px;
  padding-left: 1px;
  line-height: 20px;
  background: #fdfdfd;
}

.rateRow {
  display: flex;
  align-items: center;
  height: 18px;
}

.rateRow .field {
  width: 38px;
  margin-left: 23px;
}

.rateRow span { margin-left: 7px; }
.rateRow .advice { margin-left: 18px; }
.rateRow .auto { margin-left: 36px; }
.stop { margin: 2px 0 0 132px; }
.stop i { margin-right: 6px; }

.linkRow {
  display: flex;
  padding-left: 7px;
  margin-top: 4px;
  height: 17px;
  line-height: 16px;
}

.linkRow u {
  width: 102px;
  font-size: 12.3px;
  color: #0000d8;
}

.formats {
  width: 179px;
  height: 16px;
}

.colC {
  width: 132px;
  height: 105px;
  padding: 5px 6px 0 7px;
  border-left: 1px solid #a77;
  border-top: 1px solid #a77;
}

.direct {
  color: #c00;
  height: 17px;
}

.fmt {
  display: flex;
  align-items: center;
  height: 16.8px;
  line-height: 15px;
}

.radio {
  width: 10px;
  height: 10px;
  margin: 0 8px 0 1px;
  border: 1px solid #646;
  border-radius: 50%;
}

.radio + span { margin-right: 5px; }
.lxe + .radio { margin: 0 6px 0 0; }

.dot {
  background: radial-gradient(#000 2px, transparent 2.500px);
}

.fmt .btn {
  margin-left: auto;
  height: 16px;
}

.small { width: 39px; }
.wide { width: 70px; color: #b69; }

.colC p {
  padding-left: 8px;
  line-height: 12px;
}

.modes {
  height: 20px;
  display: flex;
  line-height: 18px;
}

.modeA {
  width: 146px;
  padding-left: 6px;
  border-bottom: 1px solid #131;
}

.modeB {
  flex: 1;
  border-left: 1px solid #313;
  border-top: 1px solid #957;
}

.modeB span {
  display: block;
  width: 145px;
  height: 17px;
  padding-left: 4px;
  border: 1px solid #957;
  border-left: 0;
  line-height: 15px;
}

.files {
  flex: 1;
  min-height: 0;
  display: flex;
  padding: 4px 0 3px 1px;
}

#fileList {
  width: 130px;
  list-style: none;
  border-top: 1px solid #131;
  padding-left: 3px;
}

#fileList li {
  height: 15.49px;
  display: flex;
  align-items: center;
  gap: 6px;
  line-height: 12px;
  padding-bottom: 3px;
  font-size: 12px;
  letter-spacing: -0.2px;
}

#fileList svg {
  margin-top: 2px;
}

.preview {
  flex: 1;
  margin-left: 4px;
  display: grid;
  grid-template: 24px 1fr / 15px 1fr;
}

.previewTop {
  border-top: 1px solid #957;
  margin: 2px 8px 0 0;
}

.previewBody {
  grid-column: 1 / 3;
  border-top: 1px solid #767;
  border-left: 2px solid #313;
}

.recStatus {
  height: 20px;
  border-top: 1px solid #222;
  padding-top: 1px;
  font-size: 12px;
  letter-spacing: -0.03px;
  line-height: 17px;
  font-feature-settings: normal;
}

.recStatus span {
  display: block;
  border-top: 1px solid #543;
  padding-left: 1px;
}

/* Dialog */
.dialog {
  position: absolute;
  left: 724px;
  top: 429px;
  width: 471px;
  height: 218px;
  background: #fdfdfd;
  border: 1px solid #58a8e0;
  border-right-width: 2px;
  border-bottom-width: 2px;
  box-shadow: 1px 3px 6px 3px #fff0d8;
  opacity: 0.33;
  color: #222;
  font-size: 11.6px;
  font-feature-settings: "hwid";
}

.full {
  font-feature-settings: normal;
}

.dialogTitle {
  height: 26px;
  display: flex;
  align-items: center;
  justify-content: space-between;
  padding: 0 9px 4px 3px;
  font-size: 12px;
}

.dialogText {
  height: 154px;
  margin: 0 4px 0 3px;
  padding: 13px 9px;
  border-bottom: 1px solid #c46a7c;
  color: #1818ff;
  line-height: 12px;
}

.dialogFoot {
  display: flex;
  align-items: center;
  height: 30px;
  padding-left: 8px;
  font-size: 12.5px;
}

.dialogFoot .full {
  padding-bottom: 4px;
}

.dialogFoot i {
  width: 11px;
  height: 11px;
  border: 1px solid #868;
  border-right-color: #eee;
  border-bottom-color: #eee;
  margin: 0 7px 2px 0;
}

.okBtn {
  width: 71px;
  height: 24px;
  margin: 5px 3px 0 auto;
  padding: 2px;
  border: 1px solid #b48;
  border-right: 2px solid #868;
  border-bottom: 2px solid #868;
  text-align: center;
  line-height: 15px;
}

.okBtn span {
  display: block;
  border: 1px dotted #636;
  height: 17px;
}

.pointer {
  position: absolute;
  left: 1121px;
  top: 622px;
}

/* Taskbar */
.taskbar {
  height: 40px;
  display: flex;
  background: linear-gradient(90deg, #211d23 1700px, #17202a 1790px, #141a24);
}

.start {
  width: 48px;
  background: #181a22;
  display: flex;
  align-items: center;
  justify-content: center;
}

.search {
  width: 344px;
  background: #2b2b2b;
  display: flex;
  align-items: center;
  padding: 0 15px 0 9px;
  color: #a8a4a8;
  font-size: 14px;
}

.search span { margin-left: 5px; }
.search svg { margin-left: auto; }

.cortana {
  width: 22px;
  height: 22px;
  border: 3px solid #fff;
  border-radius: 50%;
}

.task {
  display: flex;
  align-items: center;
  justify-content: center;
  width: 48px;
}

.run { border-bottom: 2px solid #76b9ed; }
.edge { width: 40px; margin-left: 7px; }
.folder { width: 55px; }
.psTask { width: 46px; height: 36px; margin-top: 4px; background: #505050; }
.cam { width: 40px; margin-left: 6px; }

.psIcon {
  width: 22px;
  height: 22px;
  margin-top: -4px;
  border: 1px solid #30c5f4;
  background: #0c1c26;
  color: #30c5f4;
  text-align: center;
  font: bold 12px/19px "Open Sans", sans-serif;
}

.tray {
  margin-left: auto;
  width: 280px;
  display: flex;
  align-items: center;
}

.tr1 { margin-left: 2px; }
.tr2 { margin-left: 10px; }
.tr3 { margin-left: 7px; }
.tr4 { margin-left: 11px; }
.tr5 { margin-left: 11px; }
.ime { margin-left: 10px; padding-bottom: 2px; font-size: 13px; }

.clock {
  margin-left: 10px;
  padding-bottom: 2px;
  width: 58px;
  text-align: center;
  font-size: 12.5px;
  line-height: 19px;
  letter-spacing: -0.2px;
}

.note { margin: 5px 0 0 21px; }

.peek {
  width: 1px;
  height: 40px;
  margin-left: auto;
  margin-right: 4px;
  background: #666;
}
```
